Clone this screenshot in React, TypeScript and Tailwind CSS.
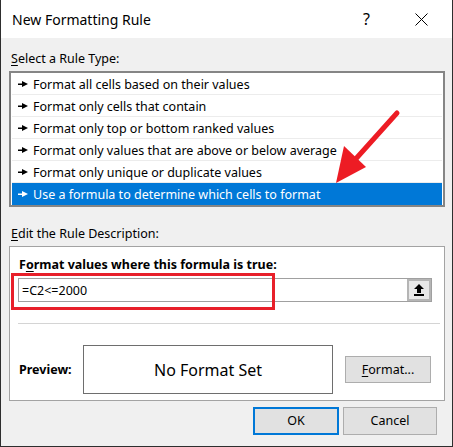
import React from "react";

const items = [
  "Format all cells based on their values",
  "Format only cells that contain",
  "Format only top or bottom ranked values",
  "Format only values that are above or below average",
  "Format only unique or duplicate values",
  "Use a formula to determine which cells to format",
];

function Marker({ color }: { color: string }) {
  return (
    <svg width="10" height="6" viewBox="0 0 10 6" className="shrink-0">
      <rect x="0" y="2.5" width="5" height="1.5" fill={color} />
      <polygon points="4,0 10,3 4,6" fill={color} />
    </svg>
  );
}

export default function App() {
  const font = { fontFamily: '"Noto Sans", "Segoe UI", sans-serif' };
  return (
    <div
      className="relative w-[453px] h-[447px] bg-[#f0f0f0] border-l border-r border-b border-[#2e2e2e] flex flex-col text-[12.5px] text-black overflow-hidden"
      style={font}
    >
      {/* Title bar */}
      <div className="h-[38px] shrink-0 bg-white flex items-center pl-[11px]">
        <span className="text-[14px] leading-none pt-[1px]">New Formatting Rule</span>
        <span className="ml-auto text-[16px] leading-none mr-[45px]">?</span>
        <svg width="13" height="13" viewBox="0 0 13 13" className="mr-[24px]">
          <path d="M0.5 0.5 L12.5 12.5 M12.5 0.5 L0.5 12.5" stroke="#000" strokeWidth="1" />
        </svg>
      </div>

      {/* Select label */}
      <div className="mt-[13px] ml-[10px] leading-[16px]">
        <span className="underline underline-offset-2">S</span>elect a Rule Type:
      </div>

      {/* List */}
      <div className="mt-[4px] ml-[8px] w-[436px] border-2 border-[#858585] bg-white px-px">
        {items.map((t, i) => {
          const sel = i === items.length - 1;
          return (
            <div
              key={t}
              className={
                sel
                  ? "h-[22px] flex items-center gap-[5px] pl-[6px] bg-[#0078d7] text-white"
                  : "h-[22px] flex items-center gap-[5px] pl-[6px] border-b border-[#ececec]"
              }
            >
              <Marker color={sel ? "#ffffff" : "#000000"} />
              <span className="leading-none pt-[3px]">{t}</span>
            </div>
          );
        })}
      </div>

      {/* Edit label */}
      <div className="mt-[19px] ml-[10px] leading-[16px]">
        <span className="underline underline-offset-2">E</span>dit the Rule Description:
      </div>

      {/* Description box */}
      <div className="relative mt-[4px] ml-[8px] w-[436px] h-[155px] border border-[#a3a3a3] bg-white flex flex-col">
        <div className="mt-[10px] ml-[9px] font-bold leading-[16px]">
          F<span className="underline underline-offset-2">o</span>rmat values where this formula is true:
        </div>
        <div className="mt-[5px] ml-[8px] w-[414px] h-[24px] border border-[#a0a0a0] flex items-center">
          <span className="ml-[3px] leading-none pt-[2px]">=C2&lt;=2000</span>
          <div className="ml-auto h-[22px] w-[24px] border-2 border-[#b5b5b5] bg-[#e8e8e8] flex items-center justify-center">
            <svg width="10" height="12" viewBox="0 0 10 12">
              <polygon points="5,0 10,5 7,5 7,9 3,9 3,5 0,5" fill="#000" />
              <rect x="0" y="10" width="10" height="2" fill="#000" />
            </svg>
          </div>
        </div>
        <div className="mt-[21px] ml-[8px] mr-[4px] h-px bg-[#d4d4d4]" />
        <div className="mt-[21px] flex items-center">
          <span className="ml-[9px] w-[64px] font-bold pt-[1px]">Preview:</span>
          <div className="w-[250px] h-[49px] border border-[#6e6e6e] flex items-center justify-center text-[16px]">
            No Format Set
          </div>
          <div className="ml-[12px] w-[86px] h-[27px] bg-[#e1e1e1] border border-[#adadad] flex items-center justify-center">
            <span className="pt-[1px]">
              <span className="underline underline-offset-2">F</span>ormat...
            </span>
          </div>
        </div>
        {/* red highlight */}
        <div className="absolute left-[1px] top-[26px] w-[264px] h-[37px] border-[3px] border-[#e8202a]" />
      </div>

      {/* Buttons */}
      <div className="mt-[6px] flex justify-end gap-[4px] mr-[15px]">
        <div className="w-[86px] h-[28px] bg-[#e1e1e1] border-2 border-[#0078d7] flex items-center justify-center">
          <span className="pt-[1px]">OK</span>
        </div>
        <div className="w-[94px] h-[28px] bg-[#e1e1e1] border border-[#adadad] flex items-center justify-center">
          <span className="pt-[1px]">Cancel</span>
        </div>
      </div>

      {/* Red arrow overlay */}
      <svg className="absolute left-0 top-0 pointer-events-none" width="453" height="447" viewBox="0 0 453 447">
        <line x1="396" y1="113" x2="352" y2="162" stroke="#ed1c24" strokeWidth="5" strokeLinecap="round" />
        <polygon points="335,183 343,146 365,167" fill="#ed1c24" />
      </svg>
    </div>
  );
}
